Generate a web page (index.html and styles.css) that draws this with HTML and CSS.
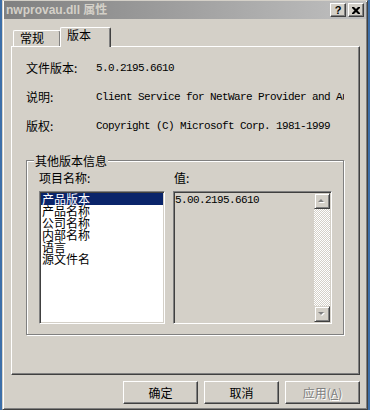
FILE: index.html
```
<!DOCTYPE html>
<html lang="zh-CN">
<head>
  <meta charset="UTF-8">
  <title>nwprovau.dll 属性</title>
  <link rel="stylesheet" href="styles.css">
</head>
<body>
  <div class="window">
    <!-- Title Bar -->
    <div class="titlebar">
      <span class="title">nwprovau.dll 属性</span>
      <div class="caption-buttons">
        <button class="cap-btn help">?</button>
        <button class="cap-btn">
          <svg width="8" height="7" viewBox="0 0 8 7">
            <path d="M0 0h2l2 2 2-2h2v1l-2.5 2.5L8 6v1H6L4 5 2 7H0V6l2.5-2.5L0 1z" fill="#000"/>
          </svg>
        </button>
      </div>
    </div>

    <!-- Tabs -->
    <div class="tabs">
      <div class="tab">常规</div>
      <div class="tab active">版本</div>
    </div>

    <!-- Tab Panel -->
    <div class="panel">
      <div class="info">
        <span class="label">文件版本:</span>
        <span class="mono">5.0.2195.6610</span>
        <span class="label">说明:</span>
        <span class="mono">Client Service for NetWare Provider and Authentication</span>
        <span class="label">版权:</span>
        <span class="mono">Copyright (C) Microsoft Corp. 1981-1999</span>
      </div>

      <fieldset class="group">
        <legend>其他版本信息</legend>
        <div class="group-grid">
          <span class="label">项目名称:</span>
          <span class="label value-label">值:</span>
          <ul class="listbox">
            <li class="selected">产品版本</li>
            <li>产品名称</li>
            <li>公司名称</li>
            <li>内部名称</li>
            <li>语言</li>
            <li>源文件名</li>
          </ul>
          <div class="valuebox">
            <span class="mono value-text">5.00.2195.6610</span>
            <div class="scrollbar">
              <div class="arrow-btn">
                <svg width="8" height="5" viewBox="0 0 8 5">
                  <path d="M4 1l3 3H1z" fill="#fff"/>
                  <path d="M3 0l3 3H0z" fill="#808080"/>
                </svg>
              </div>
              <div class="track"></div>
              <div class="arrow-btn">
                <svg width="8" height="5" viewBox="0 0 8 5">
                  <path d="M1 1h6L4 4z" fill="#fff"/>
                  <path d="M0 0h6L3 3z" fill="#808080"/>
                </svg>
              </div>
            </div>
          </div>
        </div>
      </fieldset>
    </div>

    <!-- Dialog Buttons -->
    <div class="buttons">
      <button class="btn">确定</button>
      <button class="btn">取消</button>
      <button class="btn disabled">应用(<u>A</u>)</button>
    </div>
  </div>
</body>
</html>
```

FILE: styles.css
```
/* Global Styles */
body {
  margin: 0;
  width: 370px;
  height: 410px;
  overflow: hidden;
  background-color: #3c6ea8;
  font-family: "Noto Sans CJK SC", sans-serif;
  font-size: 12px;
  color: #000;
}

.window {
  margin-left: 2px;
  width: 366px;
  height: 410px;
  box-sizing: border-box;
  background-color: #d4d0c8;
  border-top: 1px solid #d4d0c8;
  border-left: 1px solid #d4d0c8;
  border-right: 1px solid #404040;
  border-bottom: 1px solid #404040;
  box-shadow: inset 1px 1px #fff, inset -1px -1px #808080;
  padding: 0 1px;
}

/* Title Bar */
.titlebar {
  height: 18px;
  display: flex;
  align-items: center;
  justify-content: space-between;
  padding: 0 2px;
  background: linear-gradient(to right, #808080, #c0c0c0);
}

.title {
  font-family: "Liberation Sans", "Noto Sans CJK SC", sans-serif;
  font-weight: bold;
  font-size: 12px;
  color: #d4d0c8;
  line-height: 14px;
}

.caption-buttons {
  display: flex;
  gap: 2px;
}

.cap-btn {
  width: 16px;
  height: 14px;
  padding: 0;
  display: flex;
  align-items: center;
  justify-content: center;
  background-color: #d4d0c8;
  border: 1px solid;
  border-color: #fff #404040 #404040 #fff;
  box-shadow: inset -1px -1px #808080;
}

.cap-btn.help {
  font-family: "Liberation Sans", sans-serif;
  font-weight: bold;
  font-size: 11px;
  line-height: 12px;
}

/* Tabs */
.tabs {
  display: flex;
  align-items: flex-end;
  height: 19px;
  margin-top: 8px;
  padding-left: 9px;
}

.tab {
  width: 48px;
  height: 16px;
  box-sizing: border-box;
  padding-left: 6px;
  line-height: 14px;
  border-top: 1px solid #fff;
  border-left: 1px solid #fff;
  border-right: 1px solid #404040;
  border-radius: 2px 2px 0 0;
  box-shadow: inset -1px 0 #808080;
}

.tab.active {
  position: relative;
  z-index: 1;
  width: 51px;
  height: 20px;
  margin-left: -1px;
  margin-bottom: -1px;
  background-color: #d4d0c8;
}

/* Panel */
.panel {
  height: 329px;
  box-sizing: border-box;
  margin: 0 6px 0 7px;
  padding: 15px 15px 0 14px;
  border-top: 1px solid #fff;
  border-left: 1px solid #fff;
  border-right: 1px solid #404040;
  border-bottom: 1px solid #404040;
  box-shadow: inset -1px -1px #808080;
}

.info {
  display: grid;
  grid-template-columns: 70px 1fr;
  row-gap: 17px;
  line-height: 12px;
}

.label {
  white-space: nowrap;
}

.mono {
  font-family: "Liberation Mono", monospace;
  font-size: 11px;
  letter-spacing: -0.6px;
  white-space: nowrap;
  overflow: hidden;
}

/* Group Box */
.group {
  margin: 22px 0 0;
  padding: 5px 10px 10px 12px;
  min-width: 0;
  border: 1px solid #808080;
  box-shadow: inset 1px 1px #fff, 1px 1px #fff;
}

.group legend {
  margin-left: -5px;
  padding: 0 1px;
  line-height: 13px;
  background-color: #d4d0c8;
}

.group-grid {
  display: grid;
  grid-template-columns: 126px 159px;
  grid-template-rows: 12px 133px;
  column-gap: 8px;
  row-gap: 7px;
  line-height: 12px;
}

.value-label {
  padding-left: 1px;
}

.listbox,
.valuebox {
  box-sizing: border-box;
  margin: 0;
  padding: 1px;
  border: 1px solid;
  border-color: #808080 #fff #fff #808080;
  box-shadow: inset 1px 1px #404040, inset -1px -1px #d4d0c8;
}

.listbox {
  list-style: none;
  background-color: #fff;
}

.listbox li {
  padding-left: 1px;
  line-height: 12px;
}

.listbox li.selected {
  background-color: #0a246a;
  color: #fff;
}

.valuebox {
  display: flex;
  background-color: #d4d0c8;
}

.value-text {
  flex: 1;
  padding-top: 1px;
}

/* Scrollbar */
.scrollbar {
  width: 16px;
  display: flex;
  flex-direction: column;
}

.arrow-btn {
  width: 16px;
  height: 16px;
  box-sizing: border-box;
  display: flex;
  align-items: center;
  justify-content: center;
  background-color: #d4d0c8;
  border: 1px solid;
  border-color: #d4d0c8 #404040 #404040 #d4d0c8;
  box-shadow: inset 1px 1px #fff, inset -1px -1px #808080;
}

.track {
  flex: 1;
  background-image: repeating-conic-gradient(#fff 0 25%, #d4d0c8 0 50%);
  background-size: 2px 2px;
}

/* Dialog Buttons */
.buttons {
  display: flex;
  justify-content: flex-end;
  gap: 6px;
  margin: 6px 6px 0 0;
}

.btn {
  width: 75px;
  height: 23px;
  padding: 0;
  font-family: "Noto Sans CJK SC", sans-serif;
  font-size: 12px;
  color: #000;
  background-color: #d4d0c8;
  border: 1px solid;
  border-color: #fff #404040 #404040 #fff;
  box-shadow: inset -1px -1px #808080;
}

.btn.disabled {
  color: #808080;
  text-shadow: 1px 1px #fff;
}
```
